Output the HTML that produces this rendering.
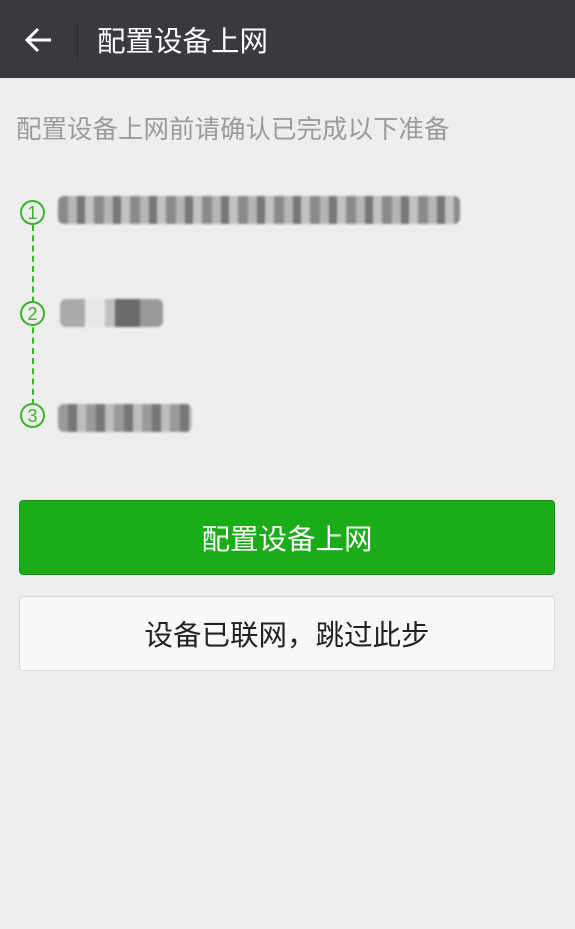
<!DOCTYPE html>
<html><head><meta charset="utf-8"><style>
body{margin:0;width:575px;height:929px;background:#eeeeee;font-family:"Liberation Sans","Noto Sans CJK SC",sans-serif;position:relative;overflow:hidden}
.hdr{position:absolute;left:0;top:0;width:575px;height:78px;background:#393a3f}
.hdr .t{position:absolute;left:97px;top:24px;font-size:28.5px;color:#fff;line-height:36px}
.sep{position:absolute;left:77px;top:22px;width:1px;height:38px;background:#2b2c30}
.sub{position:absolute;left:16px;top:114px;font-size:25.5px;color:#9b9b9b;line-height:32px;white-space:nowrap}
.c{position:absolute;left:20px;width:25px;height:25px;border:2px solid #3bb32d;border-radius:50%;box-sizing:border-box;color:#3bb32d;font-size:18px;text-align:center;line-height:22px;background:#eee}
.dash{position:absolute;left:32px;top:225px;height:180px;border-left:2px dashed #3bb32d}
.blur{position:absolute;height:28px;border-radius:6px;filter:blur(1px)}
.btn{position:absolute;left:19px;width:536px;height:75px;border-radius:4px;box-sizing:border-box;text-align:center;font-size:28.5px;line-height:78px}
</style></head><body>
<div class="hdr">
<svg style="position:absolute;left:24px;top:26px" width="30" height="28" viewBox="0 0 30 28"><path d="M27 14H4M14 3L3 14l11 11" stroke="#fff" stroke-width="3" fill="none"/></svg>
<div class="sep"></div>
<div class="t">配置设备上网</div>
</div>
<div class="sub">配置设备上网前请确认已完成以下准备</div>
<div class="dash"></div>
<div class="c" style="top:200px">1</div>
<div class="c" style="top:301px">2</div>
<div class="c" style="top:403px">3</div>
<div class="blur" style="left:58px;top:196px;width:402px;background:repeating-linear-gradient(90deg,#8a8a8a 0 10px,#b5b5b5 10px 19px,#777 19px 27px,#c2c2c2 27px 36px)"></div>
<div class="blur" style="left:60px;top:299px;width:103px;background:linear-gradient(90deg,#aaa 0 25px,#e8e8e8 25px 45px,#c0c0c0 45px 55px,#6a6a6a 55px 80px,#999 80px)"></div>
<div class="blur" style="left:58px;top:404px;width:134px;background:repeating-linear-gradient(90deg,#9a9a9a 0 10px,#777 10px 19px,#bdbdbd 19px 28px)"></div>
<div class="btn" style="top:500px;background:#1aad19;color:#fff;border:1px solid #179b16">配置设备上网</div>
<div class="btn" style="top:596px;background:#f8f8f8;color:#222;border:1px solid #d9d9d9">设备已联网，跳过此步</div>
</body></html>
